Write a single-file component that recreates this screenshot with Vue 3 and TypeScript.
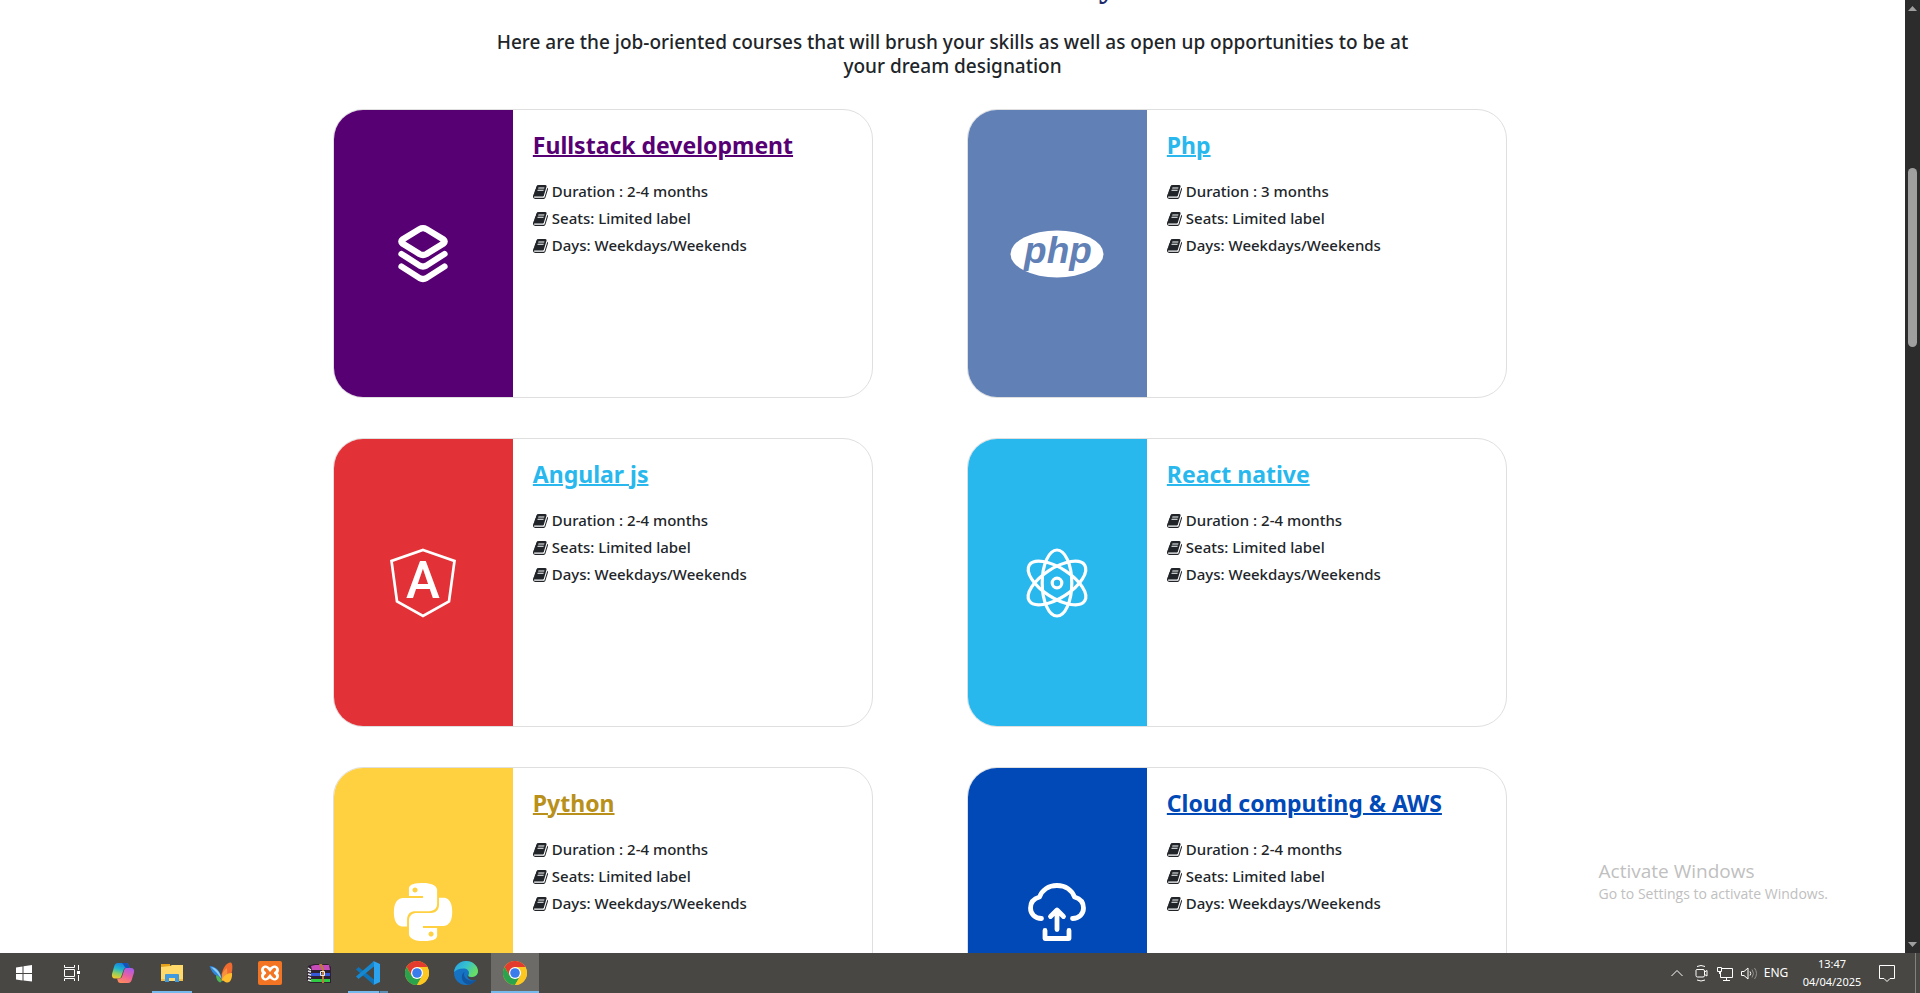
<script setup lang="ts">
interface Course {
  title: string
  duration: string
  icon: string
  tone: string
}

const courses: Course[] = [
  { title: 'Fullstack development', duration: '2-4 months', icon: 'layers', tone: 'purple' },
  { title: 'Php', duration: '3 months', icon: 'php', tone: 'slate' },
  { title: 'Angular js', duration: '2-4 months', icon: 'angular', tone: 'red' },
  { title: 'React native', duration: '2-4 months', icon: 'react', tone: 'sky' },
  { title: 'Python', duration: '2-4 months', icon: 'python', tone: 'yellow' },
  { title: 'Cloud computing & AWS', duration: '2-4 months', icon: 'cloud', tone: 'blue' },
]

const details = (course: Course): string[] => [
  `Duration : ${course.duration}`,
  'Seats: Limited label',
  'Days: Weekdays/Weekends',
]

interface TaskbarApp {
  name: string
  icon: string
  state?: string
}

const apps: TaskbarApp[] = [
  { name: 'Copilot', icon: 'copilot' },
  { name: 'File Explorer', icon: 'explorer', state: 'open' },
  { name: 'Butterfly', icon: 'butterfly' },
  { name: 'XAMPP', icon: 'xampp' },
  { name: 'WinRAR', icon: 'winrar' },
  { name: 'Visual Studio Code', icon: 'vscode', state: 'open stacked' },
  { name: 'Google Chrome', icon: 'chrome' },
  { name: 'Microsoft Edge', icon: 'edge' },
  { name: 'Google Chrome window', icon: 'chrome', state: 'active' },
]
</script>

<template>
  <div class="screen">
    <div class="browser">
      <main class="page">
        <header class="intro">
          <h1>New Skills For Today</h1>
          <p>
            Here are the job-oriented courses that will brush your skills as well as open up
            opportunities to be at your dream designation
          </p>
        </header>

        <section class="courses">
          <article v-for="course in courses" :key="course.title" class="card" :class="course.tone">
            <div class="panel">
              <svg class="logo" viewBox="0 0 100 100" aria-hidden="true">
                <g v-if="course.icon === 'layers'" fill="none" stroke="#fff" stroke-width="6.200" stroke-linecap="round" stroke-linejoin="round">
                  <path d="M46.500 25.200Q50 23.200 53.500 25.200L70.500 35.500Q73 37.500 70.500 39.500L53.500 50Q50 52 46.500 50L29.500 39.500Q27 37.500 29.500 35.500Z" />
                  <path d="M28.500 50L46.500 61.500Q50 63.500 53.500 61.500L71.500 50" />
                  <path d="M28.500 62.500L46.500 74Q50 76 53.500 74L71.500 62.500" />
                </g>
                <g v-else-if="course.icon === 'php'">
                  <ellipse cx="50" cy="50" rx="46.500" ry="23.500" fill="#fff" />
                  <text class="php-word" x="51" y="59" text-anchor="middle">php</text>
                </g>
                <g v-else-if="course.icon === 'angular'">
                  <path d="M50 17L81.500 28L76 68.500L50 83L24 68.500L18.500 28Z" fill="none" stroke="#fff" stroke-width="2.700" />
                  <text class="angular-letter" x="50" y="65" text-anchor="middle">A</text>
                </g>
                <g v-else-if="course.icon === 'react'" fill="none" stroke="#fff" stroke-width="3.200">
                  <ellipse cx="50" cy="50" rx="14.800" ry="33" />
                  <ellipse cx="50" cy="50" rx="14.800" ry="33" transform="rotate(57 50 50)" />
                  <ellipse cx="50" cy="50" rx="14.800" ry="33" transform="rotate(-57 50 50)" />
                  <circle cx="50" cy="50" r="4.800" />
                </g>
                <g v-else-if="course.icon === 'python'" transform="translate(21 21) scale(2.420)">
                  <path fill="#fff" d="M14.25.18l.9.2.73.26.59.3.45.32.34.34.25.34.16.33.1.3.04.26.02.2-.01.13V8.5l-.05.63-.13.55-.21.46-.26.38-.3.31-.33.25-.35.19-.35.14-.33.1-.3.07-.26.04-.21.02H8.77l-.69.05-.59.14-.5.22-.41.27-.33.32-.27.35-.2.36-.15.37-.1.35-.07.32-.04.27-.02.21v3.06H3.17l-.21-.03-.28-.07-.32-.12-.35-.18-.36-.26-.36-.36-.35-.46-.32-.59-.28-.73-.21-.88-.14-1.05-.05-1.23.06-1.22.16-1.04.24-.87.32-.71.36-.57.4-.44.42-.33.42-.24.4-.16.36-.1.32-.05.24-.01h.16l.06.01h8.16v-.83H6.18l-.01-2.75-.02-.37.05-.34.11-.31.17-.28.25-.26.31-.23.38-.2.44-.18.51-.15.58-.12.64-.1.71-.06.77-.04.84-.02 1.27.05zm-6.3 1.98l-.23.33-.08.41.08.41.23.34.33.22.41.09.41-.09.33-.22.23-.34.08-.41-.08-.41-.23-.33-.33-.22-.41-.09-.41.09zm13.09 3.95l.28.06.32.12.35.18.36.27.36.35.35.47.32.59.28.73.21.88.14 1.04.05 1.23-.06 1.23-.16 1.04-.24.86-.32.71-.36.57-.4.45-.42.33-.42.24-.4.16-.36.09-.32.05-.24.02-.16-.01h-8.22v.82h5.84l.01 2.76.02.36-.05.34-.11.31-.17.29-.25.25-.31.24-.38.2-.44.17-.51.15-.58.13-.64.09-.71.07-.77.04-.84.01-1.27-.04-1.07-.14-.9-.2-.73-.25-.59-.3-.45-.33-.34-.34-.25-.34-.16-.33-.1-.3-.04-.25-.02-.2.01-.13v-5.34l.05-.64.13-.54.21-.46.26-.38.3-.32.33-.24.35-.2.35-.14.33-.1.3-.06.26-.04.21-.02.13-.01h5.84l.69-.05.59-.14.5-.21.41-.28.33-.32.27-.35.2-.36.15-.36.1-.35.07-.32.04-.28.02-.21V6.07h2.09l.14.01zm-6.47 14.25l-.23.33-.08.41.08.41.23.33.33.23.41.08.41-.08.33-.23.23-.33.08-.41-.08-.41-.23-.33-.33-.23-.41-.08-.41.08z" />
                </g>
                <g v-else fill="none" stroke="#fff" stroke-width="4.800" stroke-linecap="round" stroke-linejoin="round">
                  <path d="M34.500 56.500C28 56.500 23.500 52 23.500 46C23.500 40 27 36.500 32.500 35C35 28 41.500 23.500 50 23.500C58.500 23.500 65 28 67.500 35C73 36.500 76.500 40 76.500 46C76.500 52 72 56.500 65.500 56.500" />
                  <path d="M50 67.500V48.500M43.500 54.500L50 48L56.500 54.500" />
                  <path d="M38 68.500V76.500H62V68.500" />
                </g>
              </svg>
            </div>
            <div class="body">
              <h2><a href="#">{{ course.title }}</a></h2>
              <ul>
                <li v-for="line in details(course)" :key="line">
                  <svg class="book" viewBox="64 128 1664 1536" aria-hidden="true">
                    <path d="M1703 478q40 57 18 129l-275 906q-19 64-76.500 107.500t-122.500 43.500h-923q-77 0-148.500-53.500t-99.500-131.500q-24-67-2-127 0-4 3-27t4-37q1-8-3-21.500t-3-19.500q2-11 8-21t16.500-23.500 16.500-23.500q23-38 45-91.500t30-91.500q3-10 .5-30t-.5-28q3-11 17-28t17-23q21-36 42-92t25-90q1-9-2.500-32t.5-28q4-13 22-30.500t22-22.500q19-26 42.500-84.500t27.500-96.500q1-8-3-25.500t-2-26.500q2-8 9-18t18-23 17-21q8-12 16.500-30.500t15-35 16-36 19.500-32 26.500-23.500 36-11.500 47.500 5.500l-1 3q38-9 51-9h761q74 0 114 56t18 130l-274 906q-36 119-71.500 153.500t-128.500 34.500h-869q-27 0-38 15-11 16-1 43 24 70 144 70h923q29 0 56-15.500t35-41.500l300-987q7-22 5-57 38 15 59 43zm-1064 2q-4 13 2 22.500t20 9.500h608q13 0 25.500-9.500t16.500-22.500l21-64q4-13-2-22.500t-20-9.500h-608q-13 0-25.500 9.500t-16.500 22.500zm-83 256q-4 13 2 22.500t20 9.500h608q13 0 25.500-9.500t16.500-22.500l21-64q4-13-2-22.500t-20-9.500h-608q-13 0-25.500 9.500t-16.500 22.500z" />
                  </svg>
                  <span>{{ line }}</span>
                </li>
              </ul>
            </div>
          </article>
        </section>
      </main>

      <div class="scrollbar" aria-hidden="true">
        <svg viewBox="0 0 15 14"><path d="M3 11L7.500 6L12 11Z" /></svg>
        <div class="track"><div class="thumb"></div></div>
        <svg viewBox="0 0 15 14"><path d="M3 3L7.500 8L12 3Z" /></svg>
      </div>

      <aside class="activation">
        <strong>Activate Windows</strong>
        <span>Go to Settings to activate Windows.</span>
      </aside>
    </div>

    <footer class="taskbar">
      <nav class="apps">
        <button aria-label="Start">
          <svg viewBox="0 0 24 24" fill="#fff"><path d="M4 6.500L10.500 5.500V12H4ZM11.500 5.300L20 4V12H11.500ZM4 13H10.500V19.500L4 18.500ZM11.500 13H20V20.500L11.500 19.500Z" /></svg>
        </button>
        <button class="view" aria-label="Task View">
          <svg viewBox="0 0 24 24" fill="none" stroke="#fff"><path d="M4.500 4V6.500H14.500V4M4.500 20V17.500H14.500V20M4.500 8.500H14.500V15.500H4.500ZM18.500 4V9M18.500 14V20" /><path fill="#fff" stroke="none" d="M17 10H20V13H17Z" /></svg>
        </button>
        <button v-for="app in apps" :key="app.name" :class="app.state" :aria-label="app.name">
          <svg viewBox="0 0 24 24" aria-hidden="true">
            <g v-if="app.icon === 'copilot'">
              <defs>
                <linearGradient id="copilot-left" x1="0.600" y1="0" x2="0.300" y2="1">
                  <stop offset="0" stop-color="#167de0" /><stop offset=".4" stop-color="#20b5cf" /><stop offset=".7" stop-color="#8bcf66" /><stop offset="1" stop-color="#f3c928" />
                </linearGradient>
                <linearGradient id="copilot-right" x1="0.700" y1="0" x2="0.300" y2="1">
                  <stop offset="0" stop-color="#a85be8" /><stop offset=".5" stop-color="#ea5f9f" /><stop offset="1" stop-color="#ff8b5c" />
                </linearGradient>
              </defs>
              <path fill="url(#copilot-left)" d="M7 2H15C17 2 17.500 3 18 5L18.500 7H15C13.500 7 12.800 7.800 12.300 9.500L10.500 15C9.800 17 9 17.500 7.500 17.500H4C1.500 17.500.500 15.500 1 13L3.300 5C4 3 5 2 7 2Z" />
              <path fill="url(#copilot-right)" d="M17 22H9.500C7.500 22 7 21 6.500 19L6 17.500H8.500C10.200 17.500 10.800 16.500 11.400 14.500L13 9.500C13.700 7.500 14.500 7 16 7H20C22.500 7 23.500 8.500 23 11.500L20.700 19C20 21 19 22 17 22Z" />
              <path fill="#1452ba" d="M11 2H15C17 2 17.500 3 18 5L18.500 7H15.500C14 7 13.300 5.500 12.800 4Z" />
            </g>
            <g v-else-if="app.icon === 'explorer'">
              <path fill="#e3a21a" d="M1 3H10V6H1Z" />
              <path fill="#ffd969" d="M1 6L10 5L12 4H23V20H1Z" />
              <path fill="#3f9ae0" d="M5 21V14Q5 13 6 13H18Q19 13 19 14V21H15V17H9V21Z" />
              <path fill="#f2bc45" d="M1 18H5V20H1ZM19 18H23V20H19Z" />
            </g>
            <g v-else-if="app.icon === 'butterfly'">
              <path fill="#ef6b2f" d="M12.500 14C14 6 18 1 22 1.500C24 3 23.500 9 22.500 12.500L15 17Z" />
              <path fill="#f5923f" d="M12.500 20C12 14 14 10 18 7L18.500 16Z" />
              <path fill="#ffbd2e" d="M12.500 20C14 15 18 12 23 12C23.500 17 21.500 22 18 21.500C15.500 21.500 14 18 12.500 20Z" />
              <path fill="#2e86dd" d="M0.500 5C6 5 11 9 12.500 17L8 15C4 13 2 9 0.500 5Z" />
              <path fill="#8ccdf5" d="M2 6C8 7 11 11 12.500 18L8 12Z" />
              <path fill="#4bb75a" d="M7 14.500C10 14.500 12 17 12.500 21C10 22 7.500 20 7 14.500Z" />
            </g>
            <g v-else-if="app.icon === 'xampp'">
              <rect width="24" height="24" rx="2" fill="#f37422" />
              <path fill="none" stroke="#fff" stroke-width="9" stroke-linecap="round" d="M7.500 9L16.500 15M16.500 9L7.500 15" />
              <path fill="none" stroke="#f37422" stroke-width="3.200" stroke-linecap="round" d="M7.500 8.500L9.500 10.500M16.500 8.500L14.500 10.500M7.500 15.500L9.500 13.500M16.500 15.500L14.500 13.500M9.500 12H14.500" />
            </g>
            <g v-else-if="app.icon === 'winrar'">
              <path fill="#2d2030" d="M1 5L7 3H21L24 6V22H3L0 19Z" />
              <path fill="#c74bb8" d="M4 5L8 4H22L23 9H5Z" />
              <path fill="#3558d8" d="M4 12H23V15H4Z" />
              <path fill="#2ecb43" d="M4 18H23V21H4Z" />
              <path fill="none" stroke="#e9e9e9" stroke-width="1.500" d="M1 7L4 9M1 10L4 11M1 13L4 14M1 16L4 17M1 19L4 20" />
              <path fill="#b87d38" d="M12 3H15L17 8V22H15V9Z" />
              <path fill="none" stroke="#f3ead9" d="M13.500 10.500H17.500V14.500H13.500Z" />
            </g>
            <g v-else-if="app.icon === 'vscode'">
              <path fill="#0e74ba" d="M2.500 6L18 18.500V24L0 8.500Z" />
              <path fill="#1688d0" d="M2.500 18L18 5.500V0L0 15.500Z" />
              <path fill="#2ba3ee" d="M17.500 0L24 3V21L17.500 24C18 23.500 18 22 18 22V2Z" />
            </g>
            <g v-else-if="app.icon === 'chrome'">
              <circle cx="12" cy="12" r="12" fill="#fdc722" />
              <path fill="#e33b2e" d="M1.600 6A12 12 0 0 1 22.400 6H12L6.800 15Z" />
              <path fill="#2ba24c" d="M1.600 6A12 12 0 0 0 12 24L17.200 15L12 12L6.800 15Z" />
              <path fill="#fdc722" d="M12 6H22.400A12 12 0 0 1 12 24L17.200 15Z" />
              <circle cx="12" cy="12" r="6" fill="#fff" />
              <circle cx="12" cy="12" r="4.800" fill="#3a7cec" />
            </g>
            <g v-else>
              <defs>
                <linearGradient id="edge-top" x1="0" y1="0" x2="1" y2=".5">
                  <stop offset="0" stop-color="#279de0" /><stop offset=".5" stop-color="#35c0d2" /><stop offset="1" stop-color="#68de62" />
                </linearGradient>
              </defs>
              <circle cx="12" cy="12" r="12" fill="#1673c4" />
              <path fill="url(#edge-top)" d="M0 11C1 4 6 0 12 0C19 0 24 5 24 10C24 14 21 16 17.500 16C14.500 16 14 15 14.500 14C16 11 14 8 10.500 7.500C6 7 2 9 0 11Z" />
              <path fill="#1256a0" d="M9 12C6 17 9 23 15 23.600C18.500 23 21 21 22.500 18.500C17 21 11 19 10 14C9.800 13 10 12 11 11Z" />
              <path fill="#484743" d="M24 12V18L22.500 18.500C17 20.500 12.500 17.500 13.500 13.500C13.500 16 16 16.700 18.500 16C21.500 16 23.500 14 24 12Z" />
            </g>
          </svg>
        </button>
      </nav>

      <div class="tray">
        <button aria-label="Show hidden icons"><svg viewBox="0 0 24 24"><path d="M6.500 15L12 9.500L17.500 15" /></svg></button>
        <button aria-label="Meet Now"><svg viewBox="0 0 24 24"><path d="M7.500 8.500H14Q15.500 8.500 15.500 10V14.500Q15.500 16 14 16H8.500Q7 16 7 14.500V9ZM15.500 11L18 9.500V15L15.500 13.500M8 5.500Q12 3.500 16 5.500M8 19Q12 21 16 19" /></svg></button>
        <button aria-label="Network"><svg viewBox="0 0 24 24"><path d="M9 7.500H19.500V16.500H7.500V11M13.500 16.500V19.500M10 19.500H17M4.500 6.500H8.500V10.500H4.500ZM6.500 10.500V13" /></svg></button>
        <button aria-label="Volume"><svg viewBox="0 0 24 24"><path d="M4.500 10.500H7L11 7V18L7 14.500H4.500ZM13 10.500Q14.500 12.500 13 14.500" /><path class="faint" d="M15 8.500Q18 12.500 15 16.500M17.500 7Q21.500 12.500 17.500 18" /></svg></button>
        <button class="language">ENG</button>
        <button class="clock"><span>13:47</span><span>04/04/2025</span></button>
        <button class="notice" aria-label="Notifications"><svg viewBox="0 0 24 24"><path d="M4.500 4.500H19.500V17.500H15L12 20.500L9 17.500H4.500Z" /></svg></button>
      </div>
    </footer>
  </div>
</template>

<style>
body {
  margin: 0;
}
</style>

<style scoped>
* {
  box-sizing: border-box;
}

.screen {
  display: flex;
  flex-direction: column;
  height: 100vh;
  overflow: hidden;
  background: #fff;
  color: #212529;
  font-family: "Noto Sans", "Open Sans", sans-serif;
}

.browser {
  position: relative;
  display: flex;
  flex: 1;
  min-height: 0;
}

.page {
  flex: 1;
  min-width: 0;
  overflow: hidden;
}

.intro {
  max-width: 936px;
  margin: -40px auto 0;
  text-align: center;
}

.intro h1 {
  margin: 0 0 22px;
  color: #1d2a6b;
  font: 700 36px/48px "Liberation Serif", serif;
}

.intro p {
  margin: 0;
  font-size: 19px;
  font-weight: 500;
  line-height: 24px;
}

.courses {
  display: grid;
  grid-template-columns: 1fr 1fr;
  gap: 40px 94px;
  max-width: 1320px;
  margin: 31px auto 0;
  padding: 0 106px 40px 40px;
}

.card {
  display: flex;
  min-height: 289px;
  overflow: hidden;
  border: 1px solid #dfdfdf;
  border-radius: 30px;
}

.panel {
  display: flex;
  flex: 0 0 33.333%;
  align-items: center;
  justify-content: center;
  background: var(--tone);
}

.logo {
  width: 100px;
  height: 100px;
}

.php-word {
  fill: var(--tone);
  font: italic 700 37px "Liberation Sans", sans-serif;
}

.angular-letter {
  fill: #fff;
  font: 500 51px Roboto, sans-serif;
}

.body {
  flex: 1;
  padding: 20px;
}

h2 {
  margin: 0 0 18px;
  font-size: 23px;
  line-height: 30px;
}

h2 a {
  color: var(--link);
  text-decoration-thickness: 2px;
}

ul {
  margin: 0;
  padding: 0;
  list-style: none;
}

li {
  display: flex;
  gap: 4px;
  align-items: center;
  font-size: 15px;
  font-weight: 500;
  line-height: 27px;
}

.book {
  width: 15px;
  height: 14px;
  fill: #212529;
}

.purple { --tone: #570073; --link: #570073; }
.slate { --tone: #6180b6; --link: #29b8ed; }
.red { --tone: #e23237; --link: #29b8ed; }
.sky { --tone: #29b8ed; --link: #29b8ed; }
.yellow { --tone: #ffd040; --link: #b8901a; }
.blue { --tone: #0149b7; --link: #0149b7; }

.scrollbar {
  display: flex;
  flex-direction: column;
  width: 15px;
  background: #2c2c2c;
}

.scrollbar svg {
  height: 14px;
  fill: #9f9f9f;
}

.track {
  flex: 1;
  padding: 154px 3px 0;
}

.thumb {
  height: 179px;
  border-radius: 5px;
  background: #9f9f9f;
}

.activation {
  position: absolute;
  right: 92px;
  bottom: 49px;
  display: flex;
  flex-direction: column;
  color: #c0c0c0;
  font-family: "Open Sans", sans-serif;
}

.activation strong {
  font-size: 19px;
  font-weight: 400;
  line-height: 26px;
}

.activation span {
  font-size: 14px;
  line-height: 20px;
}

.taskbar {
  display: flex;
  justify-content: space-between;
  height: 40px;
  background: #484743;
}

.apps,
.tray {
  display: flex;
}

.apps {
  gap: 1px;
}

.taskbar button {
  display: flex;
  align-items: center;
  justify-content: center;
  padding: 0;
  border: 0;
  background: none;
  color: #fff;
  font: 12px/18px "Noto Sans", sans-serif;
}

.taskbar svg {
  width: 24px;
  height: 24px;
}

.apps button {
  width: 48px;
}

.apps .view {
  width: 46px;
  margin-right: 3px;
}

.apps .open {
  background: linear-gradient(#76b9ed, #76b9ed) center bottom / 40px 2px no-repeat;
}

.apps .stacked {
  background:
    linear-gradient(90deg, #76b9ed 31px, #45627a 31px 32px, #5b8db5 32px) center bottom / 40px 2px no-repeat;
}

.apps .active {
  background: linear-gradient(#76b9ed, #76b9ed) center bottom / 48px 2px no-repeat #6c6b68;
}

.tray {
  padding-right: 4px;
}

.tray svg {
  fill: none;
  stroke: #fff;
}

.tray .faint {
  stroke: #94938f;
}

.taskbar .language {
  width: 30px;
}

.taskbar .clock {
  flex-direction: column;
  width: 82px;
  font-size: 11px;
}

.taskbar .notice {
  width: 43px;
  padding-left: 2px;
  padding-right: 16px;
  border-right: 1px solid #83827f;
}
</style>
